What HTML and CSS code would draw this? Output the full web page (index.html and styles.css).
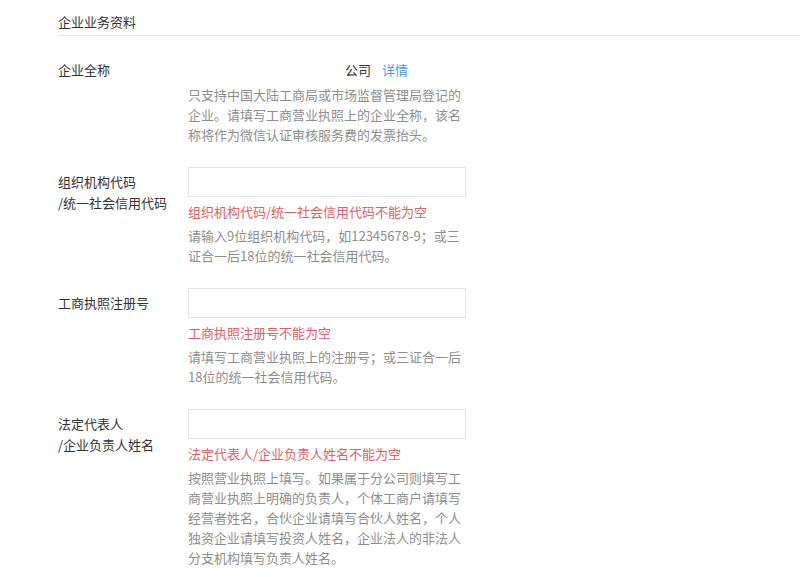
FILE: index.html
```html
<!DOCTYPE html>
<html lang="zh-CN">
<head>
<meta charset="utf-8">
<title>企业业务资料</title>
<link rel="stylesheet" href="styles.css">
</head>
<body>
<div class="page">
  <div class="section-title">企业业务资料</div>

  <div class="row row-first">
    <div class="label">企业全称</div>
    <div class="field">
      <div class="value"><span class="masked"></span><span class="company">公司</span><a class="link" href="#">详情</a></div>
      <div class="help">只支持中国大陆工商局或市场监督管理局登记的企业。请填写工商营业执照上的企业全称，该名称将作为微信认证审核服务费的发票抬头。</div>
    </div>
  </div>

  <div class="row">
    <div class="label">组织机构代码<br>/统一社会信用代码</div>
    <div class="field">
      <div class="input"></div>
      <div class="error">组织机构代码/统一社会信用代码不能为空</div>
      <div class="help">请输入9位组织机构代码，如12345678-9；或三证合一后18位的统一社会信用代码。</div>
    </div>
  </div>

  <div class="row">
    <div class="label">工商执照注册号</div>
    <div class="field">
      <div class="input"></div>
      <div class="error">工商执照注册号不能为空</div>
      <div class="help">请填写工商营业执照上的注册号；或三证合一后18位的统一社会信用代码。</div>
    </div>
  </div>

  <div class="row">
    <div class="label">法定代表人<br>/企业负责人姓名</div>
    <div class="field">
      <div class="input"></div>
      <div class="error">法定代表人/企业负责人姓名不能为空</div>
      <div class="help">按照营业执照上填写。如果属于分公司则填写工商营业执照上明确的负责人，个体工商户请填写经营者姓名，合伙企业请填写合伙人姓名，个人独资企业请填写投资人姓名，企业法人的非法人分支机构填写负责人姓名。</div>
    </div>
  </div>
</div>
</body>
</html>
```

FILE: styles.css
```css
* { box-sizing: border-box; }
html, body {
  margin: 0;
  padding: 0;
  background: #ffffff;
}
body {
  font-family: "Microsoft YaHei", "Noto Sans CJK SC", "Noto Sans", sans-serif;
  font-size: 13px;
  color: #333333;
}
.page {
  padding-left: 58px;
}
.section-title {
  padding-top: 12px;
  padding-bottom: 3px;
  line-height: 20px;
  border-bottom: 1px solid #e7e7e7;
  color: #333333;
}
.row {
  display: grid;
  grid-template-columns: 130px 278px;
  margin-top: 22px;
}
.row-first {
  margin-top: 24px;
}
.label {
  padding-top: 5px;
  line-height: 20.5px;
  color: #333333;
}
.row-first .label {
  padding-top: 0;
  line-height: 20px;
}
.field {
  display: flex;
  flex-direction: column;
}
.value {
  line-height: 20px;
  display: flex;
  align-items: center;
}
.masked {
  display: inline-block;
  width: 157px;
}
.company {
  color: #333333;
}
.link {
  color: #459ae9;
  text-decoration: none;
  margin-left: 11px;
}
.input {
  height: 30px;
  border: 1px solid #e4e4e4;
  background: #ffffff;
}
.error {
  margin-top: 5px;
  line-height: 20px;
  color: #e15f63;
}
.help {
  margin-top: 4px;
  line-height: 20px;
  color: #8e8e8e;
}
.row-first .help {
  margin-top: 5px;
}
```
